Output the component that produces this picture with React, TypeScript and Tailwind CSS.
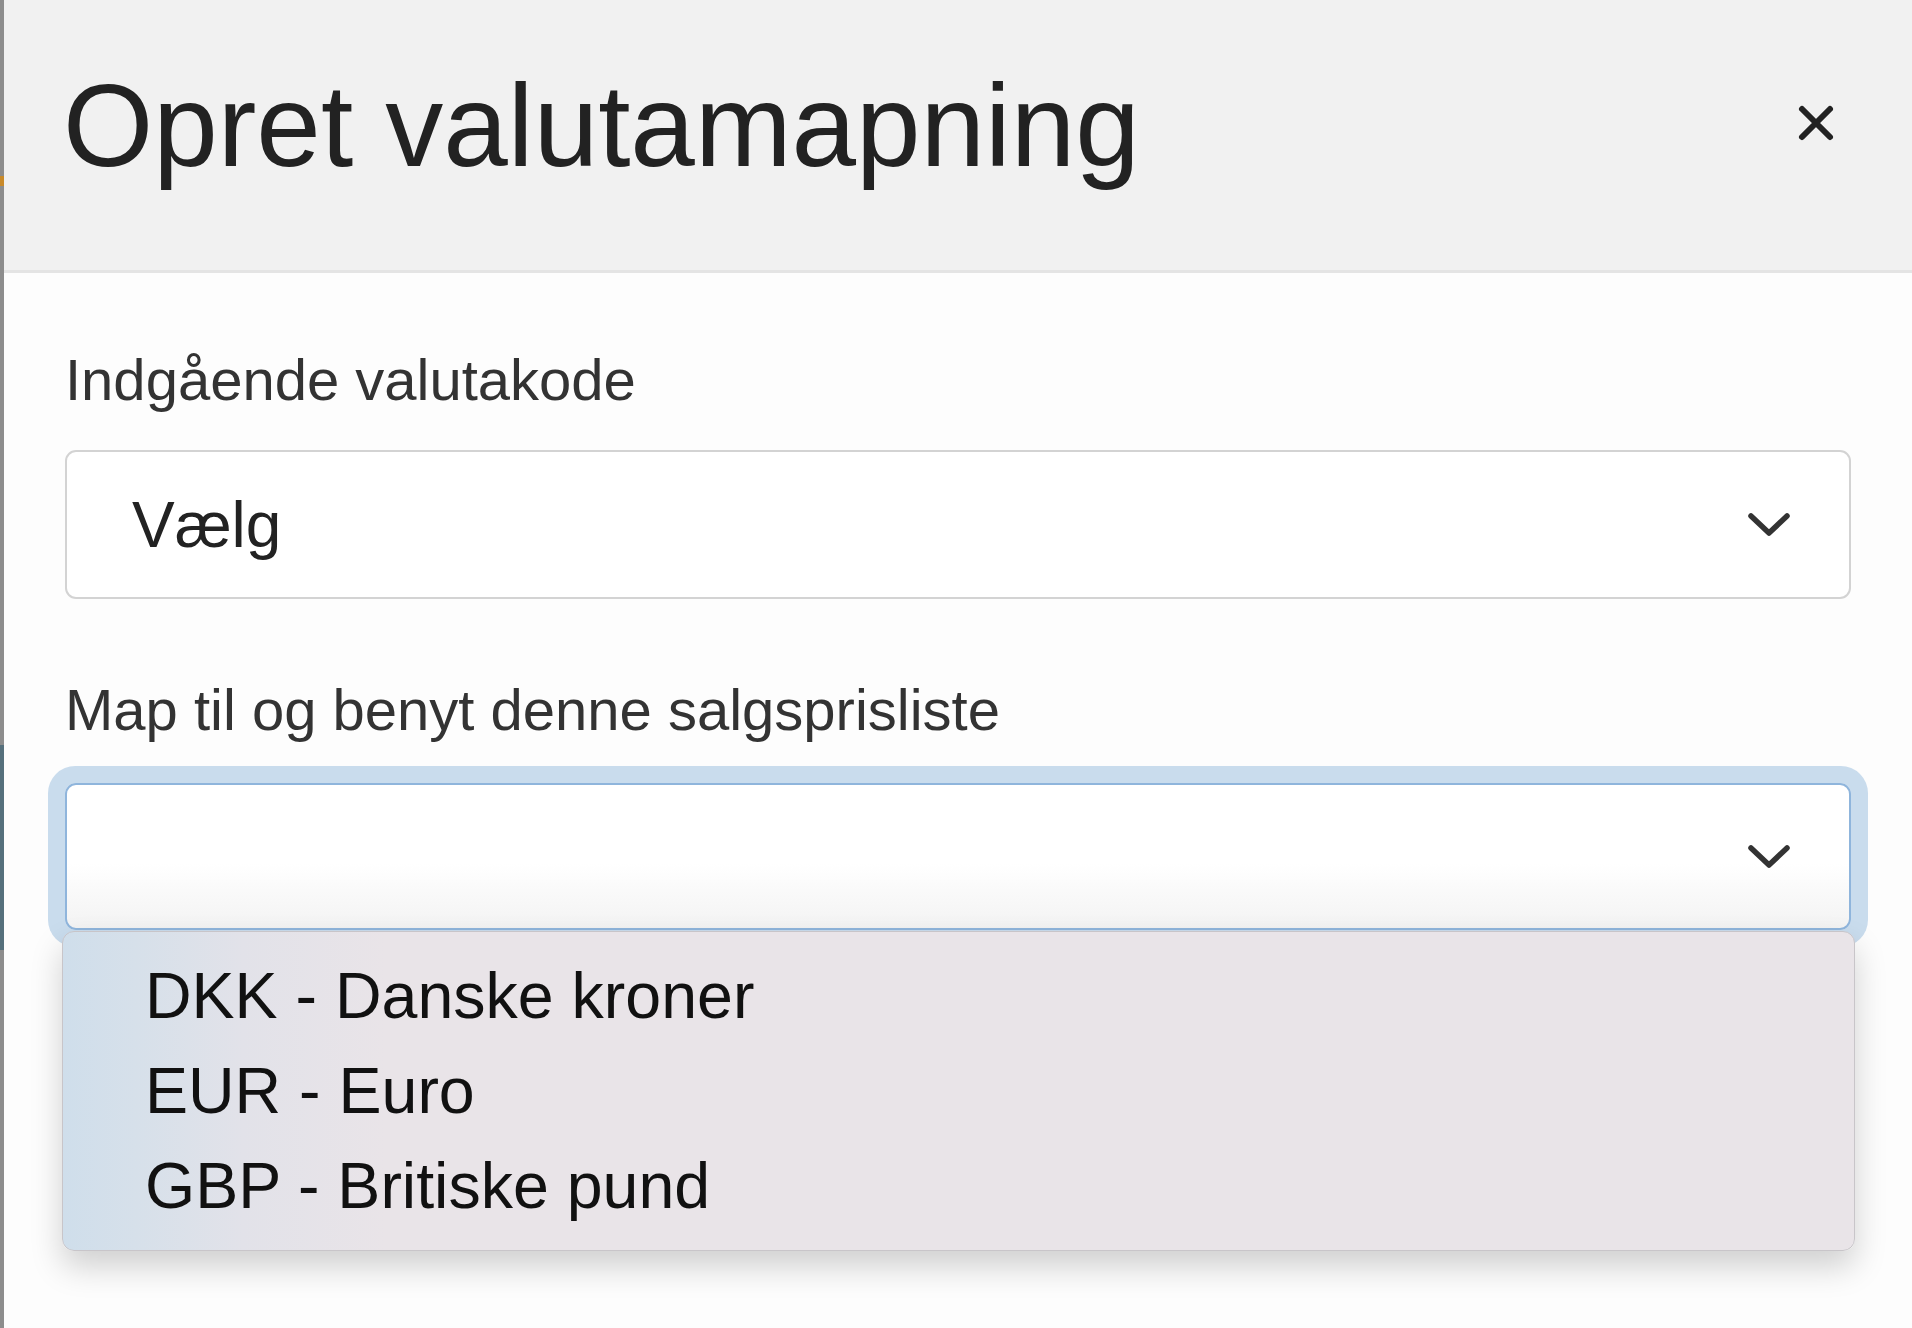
import { useState } from "react";

const options = ["DKK - Danske kroner", "EUR - Euro", "GBP - Britiske pund"];

function Chevron() {
  return (
    <svg width="44" height="28" viewBox="0 0 44 28" fill="none" aria-hidden="true">
      <polyline
        points="4,5 22,22 40,5"
        stroke="#333"
        strokeWidth="5.5"
        strokeLinecap="round"
        strokeLinejoin="round"
      />
    </svg>
  );
}

function CloseIcon() {
  return (
    <svg width="38" height="38" viewBox="0 0 38 38" fill="none" aria-hidden="true">
      <path d="M5 5L33 33M33 5L5 33" stroke="#222" strokeWidth="6" strokeLinecap="round" />
    </svg>
  );
}

export default function App() {
  const [open] = useState(true);

  return (
    <div className="flex h-[1328px] w-[1912px] overflow-hidden bg-[#fdfdfd] font-['Liberation_Sans',Arial,sans-serif]">
      {/* edge of the page behind the drawer */}
      <div className="flex w-[4px] shrink-0 flex-col bg-[#8d8d8d]">
        <div className="h-[176px]" />
        <div className="h-[10px] bg-[#c98a2a]" />
        <div className="h-[559px]" />
        <div className="h-[205px] bg-[#56707c]" />
      </div>

      <div className="flex min-w-0 flex-1 flex-col">
        <header className="flex h-[273px] shrink-0 items-start justify-between border-b-[3px] border-[#e4e4e4] bg-[#f1f1f1] pl-[59px] pr-[77px] pt-[68px]">
          <h1 className="text-[116px] leading-none text-[#222]">Opret valutamapning</h1>
          <button type="button" aria-label="Luk" className="mt-[36px]">
            <CloseIcon />
          </button>
        </header>

        <div className="px-[61px] pt-[78px]">
          <label className="block text-[58px] leading-none text-[#333]">Indgående valutakode</label>
          <div className="mt-[41px] flex h-[149px] items-center justify-between rounded-[11px] border-2 border-[#d3d3d3] bg-white pl-[65px] pr-[58px]">
            <span className="text-[64px] leading-none text-[#222]">Vælg</span>
            <Chevron />
          </div>

          <label className="mt-[82px] block text-[58px] leading-none text-[#333]">
            Map til og benyt denne salgsprisliste
          </label>
          <div className="relative mt-[44px]">
            <div className="flex h-[147px] items-center justify-end rounded-[11px] border-2 border-[#8fb5dc] bg-[linear-gradient(to_bottom,#ffffff_55%,#f3f3f3)] pr-[58px] shadow-[0_0_0_17px_#c9dced]">
              <Chevron />
            </div>

            {open && (
              <div className="absolute left-[-3px] right-[-4px] top-[148px] h-[320px] rounded-[12px] border border-[#c8c5c9] bg-[linear-gradient(90deg,#cfdeeb_0%,#d6e0ea_4%,#e2e2e9_10%,#e9e4e8_18%,#e9e4e8_100%)] pl-[82px] pt-[17px] shadow-[0_16px_32px_rgba(0,0,0,0.18)]">
                {options.map((option) => (
                  <div key={option} className="text-[64.5px] leading-[95px] text-[#111]">
                    {option}
                  </div>
                ))}
              </div>
            )}
          </div>
        </div>
      </div>
    </div>
  );
}
